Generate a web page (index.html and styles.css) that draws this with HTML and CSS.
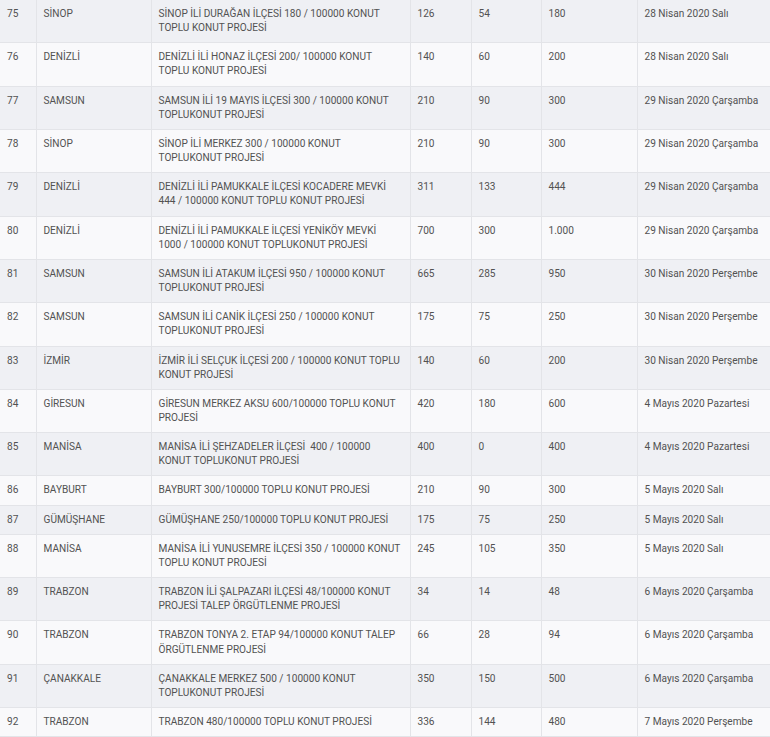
FILE: index.html
```html
<!DOCTYPE html>
<html lang="tr">
<head>
<meta charset="utf-8">
<title>Konut Projeleri</title>
<link rel="stylesheet" href="styles.css">
</head>
<body>
<table class="list">
<colgroup>
<col class="c-no"><col class="c-il"><col class="c-proj"><col class="c-a"><col class="c-b"><col class="c-c"><col class="c-date">
</colgroup>
<tbody>
<tr><td>75</td><td>SİNOP</td><td>SİNOP İLİ DURAĞAN İLÇESİ 180 / 100000 KONUT<br>TOPLU KONUT PROJESİ</td><td>126</td><td>54</td><td>180</td><td>28 Nisan 2020 Salı</td></tr>
<tr><td>76</td><td>DENİZLİ</td><td>DENİZLİ İLİ HONAZ İLÇESİ 200/ 100000 KONUT<br>TOPLU KONUT PROJESİ</td><td>140</td><td>60</td><td>200</td><td>28 Nisan 2020 Salı</td></tr>
<tr><td>77</td><td>SAMSUN</td><td>SAMSUN İLİ 19 MAYIS İLÇESİ 300 / 100000 KONUT<br>TOPLUKONUT PROJESİ</td><td>210</td><td>90</td><td>300</td><td>29 Nisan 2020 Çarşamba</td></tr>
<tr><td>78</td><td>SİNOP</td><td>SİNOP İLİ MERKEZ 300 / 100000 KONUT<br>TOPLUKONUT PROJESİ</td><td>210</td><td>90</td><td>300</td><td>29 Nisan 2020 Çarşamba</td></tr>
<tr><td>79</td><td>DENİZLİ</td><td>DENİZLİ İLİ PAMUKKALE İLÇESİ KOCADERE MEVKİ<br>444 / 100000 KONUT TOPLU KONUT PROJESİ</td><td>311</td><td>133</td><td>444</td><td>29 Nisan 2020 Çarşamba</td></tr>
<tr><td>80</td><td>DENİZLİ</td><td>DENİZLİ İLİ PAMUKKALE İLÇESİ YENİKÖY MEVKİ<br>1000 / 100000 KONUT TOPLUKONUT PROJESİ</td><td>700</td><td>300</td><td>1.000</td><td>29 Nisan 2020 Çarşamba</td></tr>
<tr><td>81</td><td>SAMSUN</td><td>SAMSUN İLİ ATAKUM İLÇESİ 950 / 100000 KONUT<br>TOPLUKONUT PROJESİ</td><td>665</td><td>285</td><td>950</td><td>30 Nisan 2020 Perşembe</td></tr>
<tr><td>82</td><td>SAMSUN</td><td>SAMSUN İLİ CANİK İLÇESİ 250 / 100000 KONUT<br>TOPLUKONUT PROJESİ</td><td>175</td><td>75</td><td>250</td><td>30 Nisan 2020 Perşembe</td></tr>
<tr><td>83</td><td>İZMİR</td><td>İZMİR İLİ SELÇUK İLÇESİ 200 / 100000 KONUT TOPLU<br>KONUT PROJESİ</td><td>140</td><td>60</td><td>200</td><td>30 Nisan 2020 Perşembe</td></tr>
<tr><td>84</td><td>GİRESUN</td><td>GİRESUN MERKEZ AKSU 600/100000 TOPLU KONUT<br>PROJESİ</td><td>420</td><td>180</td><td>600</td><td>4 Mayıs 2020 Pazartesi</td></tr>
<tr><td>85</td><td>MANİSA</td><td>MANİSA İLİ ŞEHZADELER İLÇESİ &nbsp;400 / 100000<br>KONUT TOPLUKONUT PROJESİ</td><td>400</td><td>0</td><td>400</td><td>4 Mayıs 2020 Pazartesi</td></tr>
<tr><td>86</td><td>BAYBURT</td><td>BAYBURT 300/100000 TOPLU KONUT PROJESİ</td><td>210</td><td>90</td><td>300</td><td>5 Mayıs 2020 Salı</td></tr>
<tr><td>87</td><td>GÜMÜŞHANE</td><td>GÜMÜŞHANE 250/100000 TOPLU KONUT PROJESİ</td><td>175</td><td>75</td><td>250</td><td>5 Mayıs 2020 Salı</td></tr>
<tr><td>88</td><td>MANİSA</td><td>MANİSA İLİ YUNUSEMRE İLÇESİ 350 / 100000 KONUT<br>TOPLU KONUT PROJESİ</td><td>245</td><td>105</td><td>350</td><td>5 Mayıs 2020 Salı</td></tr>
<tr><td>89</td><td>TRABZON</td><td>TRABZON İLİ ŞALPAZARI İLÇESİ 48/100000 KONUT<br>PROJESİ TALEP ÖRGÜTLENME PROJESİ</td><td>34</td><td>14</td><td>48</td><td>6 Mayıs 2020 Çarşamba</td></tr>
<tr><td>90</td><td>TRABZON</td><td>TRABZON TONYA 2. ETAP 94/100000 KONUT TALEP<br>ÖRGÜTLENME PROJESİ</td><td>66</td><td>28</td><td>94</td><td>6 Mayıs 2020 Çarşamba</td></tr>
<tr><td>91</td><td>ÇANAKKALE</td><td>ÇANAKKALE MERKEZ 500 / 100000 KONUT<br>TOPLUKONUT PROJESİ</td><td>350</td><td>150</td><td>500</td><td>6 Mayıs 2020 Çarşamba</td></tr>
<tr><td>92</td><td>TRABZON</td><td>TRABZON 480/100000 TOPLU KONUT PROJESİ</td><td>336</td><td>144</td><td>480</td><td>7 Mayıs 2020 Perşembe</td></tr>
</tbody>
</table>
</body>
</html>
```
FILE: styles.css
```css
html, body {
  margin: 0;
  padding: 0;
  background: #f8f8fa;
}
.list {
  width: 770px;
  table-layout: fixed;
  border-collapse: collapse;
  font-family: Roboto, "Liberation Sans", sans-serif;
  font-size: 10.1px;
  line-height: 14.15px;
  color: #525252;
}
.c-no { width: 36px; }
.c-il { width: 115px; }
.c-proj { width: 259px; }
.c-a { width: 61px; }
.c-b { width: 70px; }
.c-c { width: 96px; }
.c-date { width: 133px; }
.list td {
  padding: 7px;
  vertical-align: top;
  white-space: nowrap;
  overflow: hidden;
  border-bottom: 1px solid #e3e4e8;
  border-left: 1px solid #e3e4e8;
}
.list td:first-child { border-left: none; }
.list tr:nth-child(odd) { background: #eff0f4; }
.list tr:nth-child(even) { background: #f9f9fb; }
```
